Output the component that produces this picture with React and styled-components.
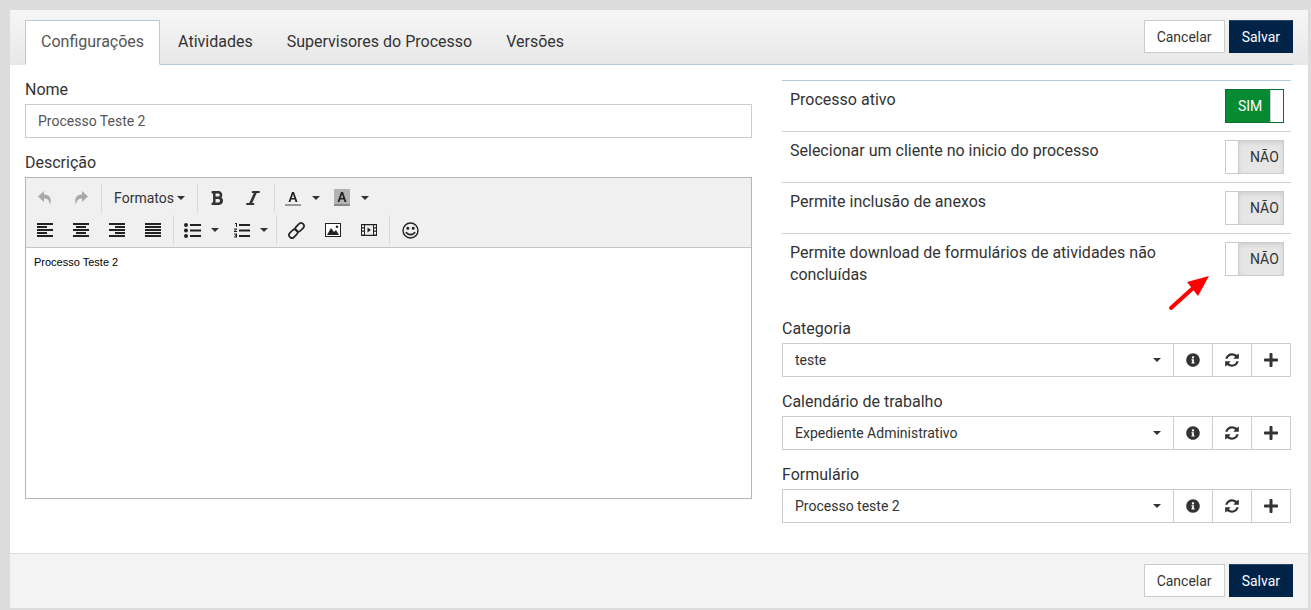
import React from "react";
import styled, {createGlobalStyle} from "styled-components";
import {FaInfoCircle, FaPlus, FaBold, FaItalic} from "react-icons/fa";

const GlobalStyle = createGlobalStyle`
    html, body {
        margin: 0;
        padding: 0;
        height: 610px;
        overflow: hidden;
        background: #dcdcdc;
        font-family: Roboto, "Liberation Sans", sans-serif;
        color: #333;
    }
    * {
        box-sizing: border-box;
    }
`

const Panel = styled.div`
    position: relative;
    margin: 10px 3px 0 10px;
    height: 598px;
    background: #fff;
    display: flex;
    flex-direction: column;
`

const Header = styled.div`
    height: 55px;
    padding: 10px 15px 0;
    background: linear-gradient(to bottom, #f6f6f6, #e8e8e8);
`

const HeaderInner = styled.div`
    height: 45px;
    display: flex;
    justify-content: space-between;
    border-bottom: 1px solid #b8cbd9;
`

const Tabs = styled.div`
    display: flex;
    gap: 2px;
`

const Tab = styled.div`
    height: 45px;
    padding: 0 15px;
    font-size: 16px;
    line-height: 41px;
    color: ${({active}) => (active ? "#555" : "#333")};
    background: ${({active}) => (active ? "#fff" : "transparent")};
    border: 1px solid ${({active}) => (active ? "#b8cbd9" : "transparent")};
    border-bottom: 1px solid ${({active}) => (active ? "#fff" : "transparent")};
`

const Actions = styled.div`
    display: flex;
    gap: 4px;
    height: 33px;
`

const Button = styled.div`
    height: 33px;
    padding: 0 12px;
    font-size: 14px;
    line-height: 32px;
    color: ${({primary}) => (primary ? "#fff" : "#333")};
    background: ${({primary}) => (primary ? "#002347" : "#fff")};
    border: 1px solid ${({primary}) => (primary ? "#002347" : "#ccc")};
    border-top-color: ${({primary}) => (primary ? "#28476a" : "#ccc")};
`

const Body = styled.div`
    flex: 1;
    display: flex;
    padding: 0 17px 0 15px;
    gap: 30px;
`

const LeftColumn = styled.div`
    width: 727px;
`

const RightColumn = styled.div`
    flex: 1;
    padding-top: 15px;
`

const Label = styled.div`
    font-size: 16px;
    line-height: 22px;
    margin-top: ${({top}) => top || 0}px;
    margin-bottom: ${({bottom}) => bottom || 3}px;
`

const TextInput = styled.div`
    height: 34px;
    padding: 0 12px;
    font-size: 14px;
    line-height: 32px;
    color: #555;
    border: 1px solid #ccc;
`

const Editor = styled.div`
    height: 322px;
    border: 1px solid #b5b5b5;
    display: flex;
    flex-direction: column;
`

const Toolbar = styled.div`
    height: 70px;
    padding: 5px 1px 0;
    background: #f0f0f0;
    border-bottom: 1px solid #c5c5c5;
    display: flex;
    flex-direction: column;
    gap: 2px;
`

const ToolRow = styled.div`
    height: 30px;
    display: flex;
`

const ToolGroup = styled.div`
    display: flex;
    height: 30px;
    border-right: ${({last}) => (last ? "none" : "1px solid #d9d9d9")};
    padding-right: ${({pad}) => pad || 0}px;
    margin-right: 1px;
`

const ToolButton = styled.div`
    width: ${({w}) => w || 36}px;
    height: 30px;
    display: flex;
    align-items: center;
    justify-content: ${({lead}) => (lead ? "flex-start" : "center")};
    padding-left: ${({lead}) => lead || 0}px;
    color: #333;
    font-size: 14px;
    gap: ${({gap}) => gap || 0}px;
`

const Caret = styled.span`
    display: inline-block;
    flex: none;
    width: 0;
    height: 0;
    border-top: 4px solid #333;
    border-left: 4px solid transparent;
    border-right: 4px solid transparent;
`

const EditorText = styled.div`
    flex: 1;
    background: #fff;
    padding: 7px 8px;
    font-family: "Liberation Sans", Arial, sans-serif;
    font-size: 11px;
    line-height: 14px;
    color: #000;
`

const OptionRow = styled.div`
    height: ${({tall}) => (tall ? 72 : 51)}px;
    padding: 8px 7px 0 8px;
    border-top: 1px solid ${({first}) => (first ? "#b8cbd9" : "#d0d0d0")};
    display: flex;
    justify-content: space-between;
    font-size: 16px;
    line-height: 22px;
`

const OptionText = styled.div`
    width: 400px;
`

const Toggle = styled.div`
    width: 59px;
    height: 34px;
    display: flex;
    flex-direction: ${({on}) => (on ? "row" : "row-reverse")};
    border: 1px solid ${({on}) => (on ? "#0a6e2c" : "#ccc")};
    background: #fff;
    font-size: 14px;
    line-height: 32px;
`

const ToggleLabel = styled.div`
    width: 45px;
    padding-left: ${({on}) => (on ? 12 : 11)}px;
    color: ${({on}) => (on ? "#fff" : "#333")};
    background: ${({on}) => (on ? "#068a32" : "#e6e6e6")};
    border-${({on}) => (on ? "right" : "left")}: 1px solid #ccc;
    box-shadow: ${({on}) => (on ? "none" : "inset 0 2px 4px rgba(0, 0, 0, 0.1)")};
`

const SelectGroup = styled.div`
    width: 509px;
    height: 34px;
    display: flex;
    border: 1px solid #ccc;
`

const SelectValue = styled.div`
    flex: 1;
    padding: 0 12px;
    display: flex;
    align-items: center;
    justify-content: space-between;
    font-size: 14px;
    color: #333;
`

const AddonButton = styled.div`
    width: 39px;
    display: flex;
    align-items: center;
    justify-content: center;
    border-left: 1px solid #ccc;
    color: #333;
`

const Footer = styled.div`
    height: 55px;
    padding: 10px 15px 0 0;
    background: #f3f3f3;
    border-top: 1px solid #ddd;
    display: flex;
    justify-content: flex-end;
`

const Arrow = styled.svg`
    position: absolute;
    left: 1158px;
    top: 264px;
`

const SlantedItalic = styled(FaItalic)`
    transform: skewX(-10deg) scaleX(1.15);
`

const Undo = () => (
    <svg width="16" height="16" viewBox="0 0 16 16" fill="#a8a8a8">
        <path d="M7 1 L1 6.5 L7 12 V8.5 C10.5 8.5 12.5 10 13 15 C15 9 13 4.800 7 4.600 Z"/>
    </svg>
);

const Redo = () => (
    <svg width="16" height="16" viewBox="0 0 16 16" fill="#a8a8a8">
        <path d="M9 1 L15 6.500 L9 12 V8.500 C5.500 8.500 3.500 10 3 15 C1 9 3 4.800 9 4.600 Z"/>
    </svg>
);

const Align = ({kind}) => {
    const rows = {
        left: [[0, 16], [0, 10], [0, 16], [0, 10], [0, 16]],
        center: [[0, 16], [3, 10], [0, 16], [3, 10], [0, 16]],
        right: [[0, 16], [6, 10], [0, 16], [6, 10], [0, 16]],
        justify: [[0, 16], [0, 16], [0, 16], [0, 16], [0, 16]],
    }[kind];
    return (
        <svg width="16" height="14" viewBox="0 0 16 14" fill="#222">
            {rows.map(([x, w], i) => <rect key={i} x={x} y={i * 3} width={w} height="2"/>)}
        </svg>
    );
};

const BulletList = () => (
    <svg width="17" height="15" viewBox="0 0 17 15" fill="#222" style={{flex: "none"}}>
        <circle cx="2" cy="2" r="2"/>
        <circle cx="2" cy="7.500" r="2"/>
        <circle cx="2" cy="13" r="2"/>
        <rect x="6" y="1" width="11" height="2"/>
        <rect x="6" y="6.500" width="11" height="2"/>
        <rect x="6" y="12" width="11" height="2"/>
    </svg>
);

const NumberList = () => (
    <svg width="16" height="15" viewBox="0 0 16 15" fill="#222" style={{flex: "none"}}>
        <path d="M1 0h2v4H2V1H1zM0 5.500h3v1l-2 1.500h2v1H0v-1l2-1.500H0zM0 10.500h3v4H0v-1h2v-.6H1v-.8h1v-.6H0z"/>
        <rect x="5" y="1" width="11" height="2"/>
        <rect x="5" y="6.500" width="11" height="2"/>
        <rect x="5" y="12" width="11" height="2"/>
    </svg>
);

const ColorA = ({filled}) => (
    <svg width="16" height="18" viewBox="0 0 16 18" style={{flex: "none"}}>
        {filled && <rect width="16" height="17" fill="#b3b3b3"/>}
        <path d="M3.500 13 L7 3 H9 L12.500 13 H10.500 L9.800 10.500 H6.200 L5.500 13 Z M6.800 9 H9.200 L8 5.200 Z" fill="#222" fillRule="evenodd"/>
        <rect y="15" width="16" height="2" fill={filled ? "#888" : "#999"}/>
    </svg>
);

const LinkIcon = () => (
    <svg width="17" height="17" viewBox="0 0 16 16" fill="none" stroke="#222" strokeWidth="1.600">
        <rect x="6.500" y="2.250" width="9" height="5.500" rx="2.700" transform="rotate(-45 11 5)"/>
        <rect x="0.500" y="8.250" width="9" height="5.500" rx="2.700" transform="rotate(-45 5 11)"/>
    </svg>
);

const ImageIcon = () => (
    <svg width="16" height="14" viewBox="0 0 16 14">
        <rect x="0.500" y="0.500" width="15" height="13" fill="#fff" stroke="#222"/>
        <path d="M2 12 L6 5 L9 9 L11 7 L14 12 Z" fill="#222"/>
        <circle cx="12" cy="3.800" r="1.300" fill="#222"/>
    </svg>
);

const MediaIcon = () => (
    <svg width="16" height="14" viewBox="0 0 16 14" fillRule="evenodd">
        <path fill="#222" d="M0 1h16v12H0z M1 2.200v2h2v-2z M1 5.500v2h2v-2z M1 8.800v2.800h2V8.800z M13 2.200v2h2v-2z M13 5.500v2h2v-2z M13 8.800v2.800h2V8.800z M4 2.200v9.500h8V2.200z"/>
        <path fill="#222" d="M6.500 4.500 L10 7 L6.500 9.500 Z"/>
    </svg>
);

const Smile = () => (
    <svg width="17" height="17" viewBox="0 0 17 17" fill="none" stroke="#222" strokeWidth="1.400">
        <circle cx="8.500" cy="8.500" r="7.500"/>
        <circle cx="5.800" cy="6.200" r="0.800" fill="#222"/>
        <circle cx="11.200" cy="6.200" r="0.800" fill="#222"/>
        <path d="M4 10 C5.500 13.500 11.500 13.500 13 10" strokeWidth="1.600"/>
    </svg>
);

const Refresh = () => (
    <svg width="16" height="16" viewBox="0 0 1792 1792" fill="#333">
        <path d="M1639 1056q0 5-1 7-64 268-268 434.500t-478 166.500q-146 0-282.500-55t-243.500-157l-129 129q-19 19-45 19t-45-19-19-45v-448q0-26 19-45t45-19h448q26 0 45 19t19 45-19 45l-137 137q71 66 161 102t187 36q134 0 250-65t186-179q11-17 53-117 8-23 30-23h192q13 0 22.500 9.500t9.500 22.500zm25-800v448q0 26-19 45t-45 19h-448q-26 0-45-19t-19-45 19-45l138-138q-148-137-349-137-134 0-250 65t-186 179q-11 17-53 117-8 23-30 23h-199q-13 0-22.500-9.500t-9.500-22.500v-7q65-268 270-434.500t480-166.500q146 0 284 55.500t245 156.500l130-129q19-19 45-19t45 19 19 45z"/>
    </svg>
);

const options = [
    {text: "Processo ativo", on: true, first: true},
    {text: "Selecionar um cliente no inicio do processo"},
    {text: "Permite inclusão de anexos"},
    {text: "Permite download de formulários de atividades não concluídas", tall: true},
];

const selects = [
    {label: "Categoria", value: "teste", top: 13},
    {label: "Calendário de trabalho", value: "Expediente Administrativo", top: 14},
    {label: "Formulário", value: "Processo teste 2", top: 14},
];

const ActionButtons = () => (
    <Actions>
        <Button>Cancelar</Button>
        <Button primary>Salvar</Button>
    </Actions>
);

const App = () => {
    return (
        <>
            <GlobalStyle/>
            <Panel>
                <Header>
                    <HeaderInner>
                        <Tabs>
                            <Tab active>Configurações</Tab>
                            <Tab>Atividades</Tab>
                            <Tab>Supervisores do Processo</Tab>
                            <Tab>Versões</Tab>
                        </Tabs>
                        <ActionButtons/>
                    </HeaderInner>
                </Header>
                <Body>
                    <LeftColumn>
                        <Label top={14}>Nome</Label>
                        <TextInput>Processo Teste 2</TextInput>
                        <Label top={14}>Descrição</Label>
                        <Editor>
                            <Toolbar>
                                <ToolRow>
                                    <ToolGroup pad={2}>
                                        <ToolButton><Undo/></ToolButton>
                                        <ToolButton><Redo/></ToolButton>
                                    </ToolGroup>
                                    <ToolGroup pad={1}>
                                        <ToolButton w={93} gap={3}>Formatos<Caret/></ToolButton>
                                    </ToolGroup>
                                    <ToolGroup pad={3}>
                                        <ToolButton><FaBold size={16}/></ToolButton>
                                        <ToolButton><SlantedItalic size={16}/></ToolButton>
                                    </ToolGroup>
                                    <ToolGroup last>
                                        <ToolButton w={49} lead={9} gap={11}><ColorA/><Caret/></ToolButton>
                                        <ToolButton w={49} lead={9} gap={11}><ColorA filled/><Caret/></ToolButton>
                                    </ToolGroup>
                                </ToolRow>
                                <ToolRow>
                                    <ToolGroup pad={2}>
                                        <ToolButton><Align kind="left"/></ToolButton>
                                        <ToolButton><Align kind="center"/></ToolButton>
                                        <ToolButton><Align kind="right"/></ToolButton>
                                        <ToolButton><Align kind="justify"/></ToolButton>
                                    </ToolGroup>
                                    <ToolGroup pad={1}>
                                        <ToolButton w={50} lead={9} gap={10}><BulletList/><Caret/></ToolButton>
                                        <ToolButton w={50} lead={9} gap={10}><NumberList/><Caret/></ToolButton>
                                    </ToolGroup>
                                    <ToolGroup pad={2}>
                                        <ToolButton w={37}><LinkIcon/></ToolButton>
                                        <ToolButton><ImageIcon/></ToolButton>
                                        <ToolButton><MediaIcon/></ToolButton>
                                    </ToolGroup>
                                    <ToolGroup last>
                                        <ToolButton w={38}><Smile/></ToolButton>
                                    </ToolGroup>
                                </ToolRow>
                            </Toolbar>
                            <EditorText>Processo Teste 2</EditorText>
                        </Editor>
                    </LeftColumn>
                    <RightColumn>
                        {options.map((o) => (
                            <OptionRow key={o.text} first={o.first} tall={o.tall}>
                                <OptionText>{o.text}</OptionText>
                                <Toggle on={o.on}>
                                    <ToggleLabel on={o.on}>{o.on ? "SIM" : "NÃO"}</ToggleLabel>
                                </Toggle>
                            </OptionRow>
                        ))}
                        {selects.map((s) => (
                            <div key={s.label}>
                                <Label top={s.top}>{s.label}</Label>
                                <SelectGroup>
                                    <SelectValue>{s.value}<Caret/></SelectValue>
                                    <AddonButton><FaInfoCircle size={14}/></AddonButton>
                                    <AddonButton><Refresh/></AddonButton>
                                    <AddonButton><FaPlus size={16}/></AddonButton>
                                </SelectGroup>
                            </div>
                        ))}
                    </RightColumn>
                </Body>
                <Footer>
                    <ActionButtons/>
                </Footer>
                <Arrow width="44" height="44" viewBox="0 0 44 44">
                    <path d="M3 34 L24 15" stroke="#f00" strokeWidth="4" strokeLinecap="round"/>
                    <path d="M41 2 L19 8 L30 22 Z" fill="#f00"/>
                </Arrow>
            </Panel>
        </>
    );
}
export default App;
